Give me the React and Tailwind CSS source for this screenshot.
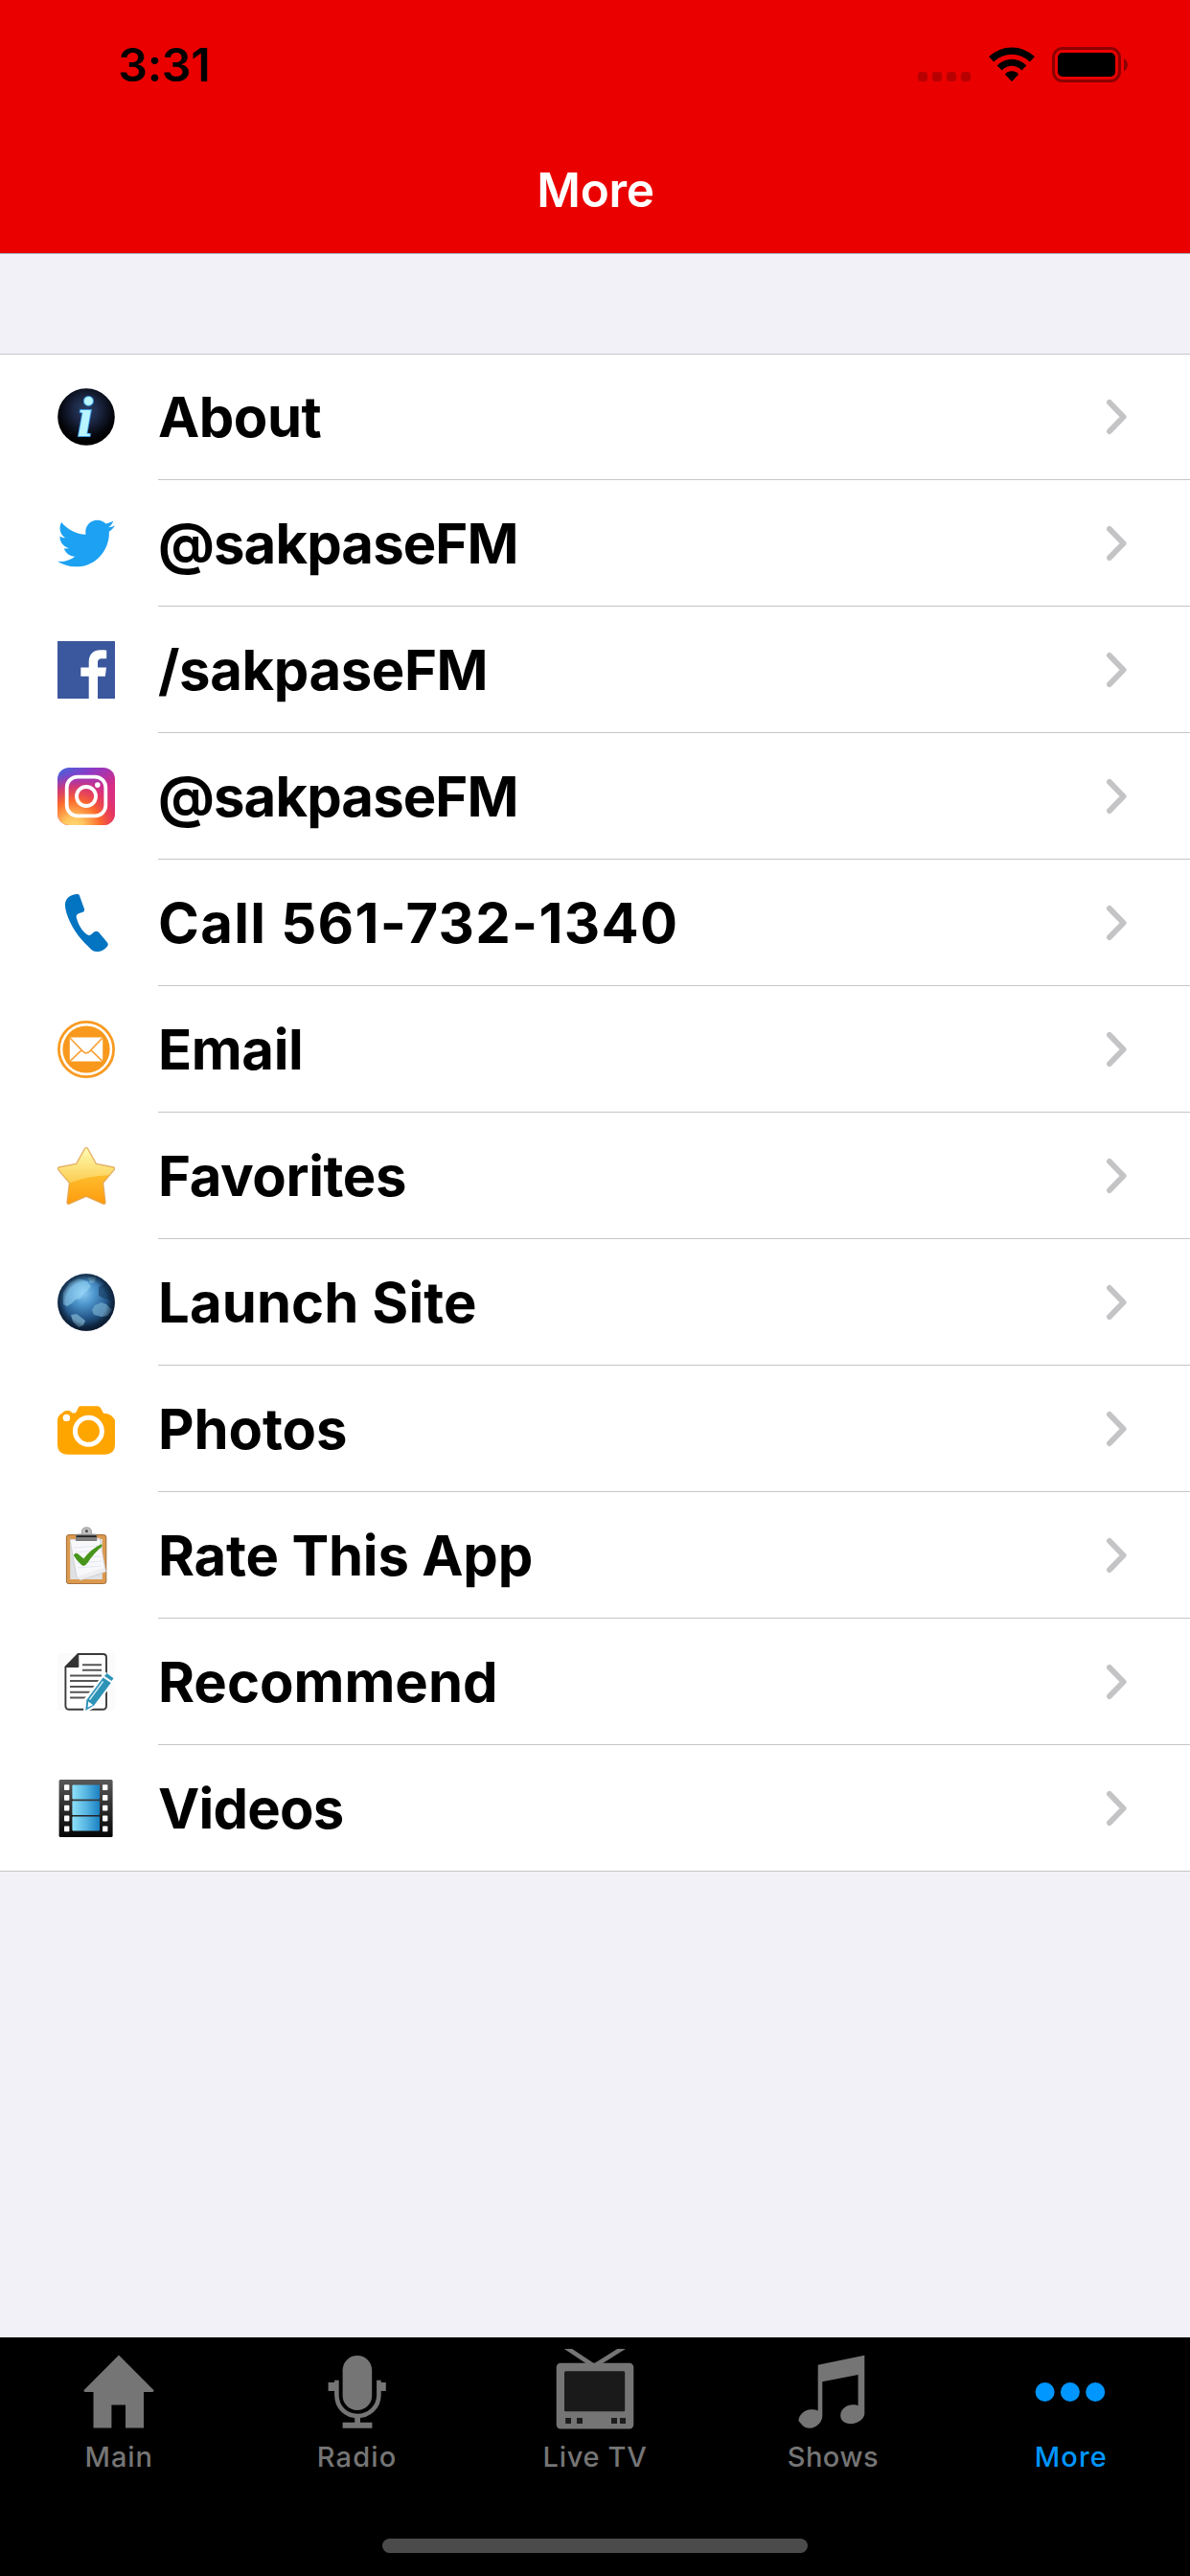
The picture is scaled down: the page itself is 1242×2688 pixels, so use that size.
import { FaTwitter } from "react-icons/fa";

function InfoIcon() {
  return (
    <svg viewBox="0 0 60 60" className="size-[60px] overflow-visible">
      <defs>
        <radialGradient id="info-bg" cx="0.5" cy="0.38" r="0.55">
          <stop offset="0" stopColor="#2b4168" />
          <stop offset="0.45" stopColor="#1a2440" />
          <stop offset="0.85" stopColor="#05070d" />
          <stop offset="1" stopColor="#000" />
        </radialGradient>
      </defs>
      <circle cx="30" cy="30" r="29.8" fill="url(#info-bg)" />
      <text
        x="20.5"
        y="49.5"
        fontSize="60"
        fontWeight="700"
        fontStyle="italic"
        fontFamily="'Liberation Serif', serif"
        fill="#b9f5ff"
        stroke="#3d9be6"
        strokeWidth="2"
        paintOrder="stroke"
      >
        i
      </text>
    </svg>
  );
}

function TwitterIcon() {
  return <FaTwitter className="size-[60px] text-[#1da1f2]" />;
}

function FacebookIcon() {
  return (
    <svg viewBox="0 0 60 60" className="size-[60px]">
      <rect width="60" height="60" fill="#3b589e" />
      <path
        d="M32.7 60V36.7H24.3V27.6H32.7V22C32.7 13.5 37.5 9.2 45 9.2C47.8 9.2 50 9.4 51.2 9.6V18.3H46.5C43 18.3 42 20 42 22.6V27.6H51L49.8 36.7H42V60Z"
        fill="#fff"
      />
    </svg>
  );
}

function InstagramIcon() {
  return (
    <svg viewBox="0 0 60 60" className="size-[60px]">
      <defs>
        <linearGradient id="ig-base" x1="0.1" y1="0" x2="0.75" y2="1">
          <stop offset="0" stopColor="#4a62d8" />
          <stop offset="0.25" stopColor="#8a3ac8" />
          <stop offset="0.6" stopColor="#d62d86" />
          <stop offset="1" stopColor="#e8306c" />
        </linearGradient>
        <radialGradient id="ig-warm" cx="0.28" cy="1.05" r="0.95">
          <stop offset="0" stopColor="#ffdc7d" />
          <stop offset="0.2" stopColor="#ffc45c" />
          <stop offset="0.5" stopColor="#fb6a2c" />
          <stop offset="0.75" stopColor="#e63a5a" stopOpacity="0.75" />
          <stop offset="1" stopColor="#c9309a" stopOpacity="0" />
        </radialGradient>
      </defs>
      <rect width="60" height="60" rx="12" fill="url(#ig-base)" />
      <rect width="60" height="60" rx="12" fill="url(#ig-warm)" />
      <rect x="9.7" y="9.7" width="40.6" height="40.6" rx="11" fill="none" stroke="#fff" strokeWidth="3.8" />
      <circle cx="30" cy="30" r="10" fill="none" stroke="#fff" strokeWidth="3.8" />
      <circle cx="41.8" cy="18.1" r="2.8" fill="#fff" />
    </svg>
  );
}

function PhoneIcon() {
  return (
    <svg viewBox="0 0 60 60" className="size-[60px]">
      <path
        d="M17 0.6C19.5 -0.2 22 -0.4 22.8 1L28 15.5C28.5 17.4 27.5 18.6 25 19.2C20.5 20.4 19.2 21.5 19.8 24.5C21.8 32 25.5 38.5 31 42.3C33 43.6 34.5 43 36.5 41C38.5 38.6 41 38 42.8 39.5L51.8 50.2C53.2 52 53 53.4 51.6 55C48.5 58.4 45.5 60 41.5 60C37.5 60 35 58 32.5 55C22 45.5 13.5 33 9.5 20C7.8 14 7.2 9 9.5 5.5C11.2 3 14 1.4 17 0.6Z"
        fill="#0274c1"
      />
    </svg>
  );
}

function EmailIcon() {
  return (
    <svg viewBox="0 0 60 60" className="size-[60px]">
      <circle cx="30" cy="30" r="28.6" fill="#fff" stroke="#f89b22" strokeWidth="2.8" />
      <circle cx="30" cy="30" r="24.6" fill="#f8991d" />
      <rect x="12.8" y="17.6" width="34.4" height="25" rx="1" fill="#fff" />
      <path
        d="M13 18L26.5 32.2Q30 35.6 33.5 32.2L47 18M13 42.4L25 30.8M47 42.4L35 30.8"
        fill="none"
        stroke="#f8a43a"
        strokeWidth="1.7"
      />
    </svg>
  );
}

function StarIcon() {
  return (
    <svg viewBox="0 0 60 60" className="size-[60px]">
      <defs>
        <linearGradient id="star-top" x1="0" y1="0" x2="0" y2="1">
          <stop offset="0" stopColor="#fffbb8" />
          <stop offset="0.5" stopColor="#fde27c" />
          <stop offset="1" stopColor="#fbc544" />
        </linearGradient>
        <linearGradient id="star-low" x1="0" y1="0" x2="0" y2="1">
          <stop offset="0" stopColor="#fdbd2e" />
          <stop offset="1" stopColor="#ff9a0c" />
        </linearGradient>
        <clipPath id="star-clip">
          <path d="M28.4 1.6Q30 -0.8 31.6 1.6L40.4 17.4L58.6 21Q60.6 21.8 59 23.8L47.6 37.4L50 57.6Q50 60 47.6 59.2L30 51.4L12.4 59.2Q10 60 10 57.6L12.4 37.4L1 23.8Q-0.6 21.8 1.4 21L19.6 17.4Z" />
        </clipPath>
      </defs>
      <g clipPath="url(#star-clip)">
        <rect width="60" height="42" fill="url(#star-top)" />
        <path d="M0 42Q14 37 26 33Q40 29.5 60 29V60H0Z" fill="url(#star-low)" />
      </g>
      <path
        d="M28.4 1.6Q30 -0.8 31.6 1.6L40.4 17.4L58.6 21Q60.6 21.8 59 23.8L47.6 37.4L50 57.6Q50 60 47.6 59.2L30 51.4L12.4 59.2Q10 60 10 57.6L12.4 37.4L1 23.8Q-0.6 21.8 1.4 21L19.6 17.4Z"
        fill="none"
        stroke="#dfa04e"
        strokeOpacity="0.8"
        strokeWidth="1.3"
      />
    </svg>
  );
}

function GlobeIcon() {
  return (
    <svg viewBox="0 0 60 60" className="size-[60px]">
      <defs>
        <radialGradient id="globe-sea" cx="0.45" cy="0.34" r="0.66">
          <stop offset="0" stopColor="#8ccbf3" />
          <stop offset="0.3" stopColor="#4d96cc" />
          <stop offset="0.65" stopColor="#26598c" />
          <stop offset="0.88" stopColor="#12304f" />
          <stop offset="1" stopColor="#0b1c30" />
        </radialGradient>
        <radialGradient id="globe-rim" cx="0.5" cy="0.5" r="0.5">
          <stop offset="0.72" stopColor="#0b1c30" stopOpacity="0" />
          <stop offset="1" stopColor="#0b1c30" stopOpacity="0.85" />
        </radialGradient>
        <clipPath id="globe-clip">
          <circle cx="30" cy="30" r="29.8" />
        </clipPath>
      </defs>
      <circle cx="30" cy="30" r="29.8" fill="url(#globe-sea)" />
      <g clipPath="url(#globe-clip)">
        <path d="M6 20L13 9L22 5L31 8L35 13L31 18L27 20L24 26L19 27L15 31L10 34L6 32Z" fill="#a4e0fb" opacity="0.5" />
        <path d="M32 4L40 3L39 9L34 10Z" fill="#9fd4ee" opacity="0.45" />
        <path d="M43 14L50 10L57 22L56 28L49 26L43 23Z" fill="#0d3050" opacity="0.5" />
        <path d="M39 33L46 30L51 32L57 38L52 44L46 45L38 43L36 38Z" fill="#79b3d2" opacity="0.65" />
        <path d="M14 43L20 42L29 49L27 54L22 56L16 50Z" fill="#84b8d3" opacity="0.7" />
      </g>
      <circle cx="30" cy="30" r="29.8" fill="url(#globe-rim)" />
    </svg>
  );
}

function CameraIcon() {
  return (
    <svg viewBox="0 0 60 60" className="size-[60px]">
      <path
        d="M24 6.2H41.5Q44 6.2 45.2 8.6L48 13.8Q56 13.6 60 21V46Q60 56.5 49 56.7H11Q0 56.5 0 46V21Q0.4 16 5 13.6Q6.5 11 9 11H12Q14 11 15.4 13.6H17.5Q19 13.6 19.8 12L21.4 8.4Q22.2 6.2 24 6.2Z"
        fill="#ffa500"
      />
      <circle cx="32.4" cy="32.3" r="14" fill="none" stroke="#fff" strokeWidth="5" />
      <circle cx="9.4" cy="18.4" r="3.7" fill="#fff" />
    </svg>
  );
}

function ClipboardIcon() {
  return (
    <svg viewBox="0 0 60 60" className="size-[60px]">
      <defs>
        <linearGradient id="clip-metal" x1="0" y1="0" x2="0" y2="1">
          <stop offset="0" stopColor="#aaa" />
          <stop offset="0.35" stopColor="#555" />
          <stop offset="0.6" stopColor="#888" />
          <stop offset="1" stopColor="#777" />
        </linearGradient>
      </defs>
      <rect x="9.4" y="8.6" width="41.4" height="51" rx="2.5" fill="#dc9a4e" stroke="#a06c34" strokeWidth="1" />
      <rect x="13.2" y="13" width="33.6" height="42" fill="#dfe1e4" />
      <path d="M13 14L44 12L50.6 47L24 56L20 53Z" fill="#eeeef1" stroke="#c4c4c8" strokeWidth="0.6" />
      <path d="M14 14H44L48 43L21 52Z" fill="#f8f8fb" />
      <path d="M17 22L43 20M18 27L44 25M19 33L45 31M20 38L46 36M21 43L46 41" stroke="#dde2ef" strokeWidth="0.8" />
      <path d="M25.5 8.6V5.5Q25.5 0.9 30.4 0.9Q35.3 0.9 35.3 5.5V8.6Z" fill="#c4c4c4" stroke="#888" strokeWidth="0.9" />
      <circle cx="30.4" cy="4.7" r="1.6" fill="#555" />
      <path d="M21.5 7.6H39Q41.2 7.6 41.2 10V15H19V10Q19 7.6 21.5 7.6Z" fill="url(#clip-metal)" />
      <path d="M20 10.2H40.5" stroke="#222" strokeWidth="1.6" />
      <path
        d="M16.8 30Q18.5 26.6 21.2 28.2L27.4 33.4Q34 24 45.6 18.2Q47.4 19 46.2 21Q38 27.5 31.6 37.6Q28 43 24.6 39.6Q20 35.5 16.8 30Z"
        fill="#47961b"
      />
    </svg>
  );
}

function DocumentIcon() {
  return (
    <svg viewBox="0 0 60 60" className="size-[60px]">
      <rect width="60" height="60" fill="#fbfbfb" />
      <path d="M21.5 1H47.5Q51 1 51 4.5V55Q51 58.8 47 58.8H12.4Q8.4 58.8 8.4 55V14.5Z" fill="#fff" stroke="#3a3a3a" strokeWidth="1.9" />
      <path d="M21.8 1V14.5H8.2Z" fill="#333" stroke="#333" strokeWidth="1" />
      <path
        d="M26 12.2H46M26 17.8H46M13 23.5H46M13 29H44M13 35H39M13 40.7H35M13 46.5H30"
        stroke="#555"
        strokeWidth="1.9"
      />
      <path d="M50 21.5L58.6 27.6L38.5 55.5L28.6 60.5L29.2 48.5Z" fill="#fff" stroke="#fff" strokeWidth="3" />
      <path d="M51.5 21L58.5 26.2L56.6 29L49 24Z" fill="#2d93b7" />
      <path d="M47.6 25.4L55.8 31L38.2 54.6L29.2 60L30.4 48.8Z" fill="#2d93b7" />
      <path d="M47.6 29.5L33.6 48.5" stroke="#d8eef5" strokeWidth="1.3" />
      <path d="M32.2 50.5L37 54L31.6 56.8Z" fill="#fff" />
    </svg>
  );
}

function FilmIcon() {
  const holes = [5.2, 16, 26.8, 37.6, 48.4];
  const frames = [5.6, 22.2, 38.6];
  return (
    <svg viewBox="0 0 60 60" className="size-[60px]">
      <defs>
        <linearGradient id="film-body" x1="0" y1="0" x2="0" y2="1">
          <stop offset="0" stopColor="#595959" />
          <stop offset="0.5" stopColor="#2c2c2c" />
          <stop offset="1" stopColor="#050505" />
        </linearGradient>
        <linearGradient id="film-frame" x1="0" y1="0" x2="1" y2="0">
          <stop offset="0" stopColor="#8fe0f8" />
          <stop offset="0.5" stopColor="#57b6e2" />
          <stop offset="1" stopColor="#1b80c2" />
        </linearGradient>
      </defs>
      <rect x="1.6" y="0" width="56" height="60" rx="1.6" fill="url(#film-body)" />
      {holes.map((y) => (
        <g key={y} fill="#fff">
          <rect x="7" y={y} width="5.4" height="5.8" rx="0.8" />
          <rect x="47" y={y} width="5.4" height="5.8" rx="0.8" />
        </g>
      ))}
      {frames.map((y) => (
        <rect key={y} x="15.4" y={y} width="28.6" height="14.8" rx="0.8" fill="url(#film-frame)" />
      ))}
    </svg>
  );
}

const rows = [
  { label: "About", Icon: InfoIcon, tracking: "tracking-[-0.5px]" },
  { label: "@sakpaseFM", Icon: TwitterIcon, tracking: "tracking-[-0.9px]" },
  { label: "/sakpaseFM", Icon: FacebookIcon, tracking: "tracking-[-0.4px]" },
  { label: "@sakpaseFM", Icon: InstagramIcon, tracking: "tracking-[-0.9px]" },
  { label: "Call 561-732-1340", Icon: PhoneIcon, tracking: "tracking-[1.28px]" },
  { label: "Email", Icon: EmailIcon, tracking: "tracking-[-0.4px]" },
  { label: "Favorites", Icon: StarIcon, tracking: "tracking-[-0.38px]" },
  { label: "Launch Site", Icon: GlobeIcon, tracking: "tracking-[0.1px]" },
  { label: "Photos", Icon: CameraIcon, tracking: "tracking-[-0.1px]" },
  { label: "Rate This App", Icon: ClipboardIcon, tracking: "tracking-[-0.2px]" },
  { label: "Recommend", Icon: DocumentIcon, tracking: "tracking-[-0.02px]" },
  { label: "Videos", Icon: FilmIcon, tracking: "tracking-[-0.8px]" },
];

function HomeTab() {
  return <path d="M50 18.6L86.6 55.2Q86.8 57 85 57H76V94.6H57V70.6H42.4V94.6H23.5V57H15Q13.2 57 13.4 55.2Z" />;
}

function RadioTab() {
  return (
    <>
      <rect x="34.6" y="19" width="30.6" height="57" rx="15.3" />
      <path d="M28.4 44.7V60C28.4 73 38 82 50 82C62 82 72.4 73 72.4 60V44.7" fill="none" stroke="currentColor" strokeWidth="4.6" />
      <path d="M19.6 47H27V56H19.6ZM73 47H79.8V56H73ZM47.2 82H53V90H47.2ZM34.6 88.7H65.4V94.7H34.6Z" />
    </>
  );
}

function TvTab() {
  return (
    <>
      <defs>
        <clipPath id="antenna-clip">
          <rect x="0" y="12" width="100" height="20" />
        </clipPath>
      </defs>
      <path d="M16 8L49 30L84 8" fill="none" stroke="currentColor" strokeWidth="4.6" clipPath="url(#antenna-clip)" />
      <rect x="9.7" y="26.7" width="80.6" height="68.8" rx="4.5" />
      <rect x="18" y="35.2" width="63.2" height="42" rx="1.5" fill="#1a1a1a" />
      <path d="M19.2 84H25V90H19.2ZM31 84H37V90H31ZM67 84H73V90H67ZM76 84H82V90H76Z" fill="#1c1c1c" />
    </>
  );
}

function MusicTab() {
  return (
    <path d="M34.7 28.7L83.3 18.8V80C83 85 76 90.2 69 90.2C62.5 90.2 58.2 86.5 58.2 81.5C58.2 75 64.5 70.2 71.5 70.2C73.5 70.2 75.4 70.6 76.6 71.2V39L39.3 46.3V82C39.3 88 33.5 94.7 26 94.7C19.5 94.7 17.8 90.5 14.5 87.2C14.5 81 20.5 75.3 27.5 75.3C30.4 75.3 33 75.7 34.7 76.6Z" />
  );
}

function MoreTab() {
  return (
    <>
      <circle cx="22.6" cy="57" r="10" />
      <circle cx="48.9" cy="57" r="10" />
      <circle cx="75.2" cy="57" r="10" />
    </>
  );
}

const tabs = [
  { label: "Main", Glyph: HomeTab, style: "text-[#757575] tracking-[0.92px]" },
  { label: "Radio", Glyph: RadioTab, style: "text-[#757575] tracking-[1.16px]" },
  { label: "Live TV", Glyph: TvTab, style: "text-[#757575] tracking-[0.68px]" },
  { label: "Shows", Glyph: MusicTab, style: "text-[#757575] tracking-[0.51px]" },
  { label: "More", Glyph: MoreTab, style: "text-[#0096ff] tracking-[1.05px]" },
];

function StatusIcons() {
  return (
    <div className="flex h-[37px] items-start">
      <div className="mr-[19px] flex gap-[5px] pt-[26px]">
        {[0, 1, 2, 3].map((dot) => (
          <span key={dot} className="size-[10px] rounded-[3px] bg-[#b90000]" />
        ))}
      </div>
      <svg viewBox="0 0 48 36" className="mr-[18px] h-[36px] w-[48px]">
        <path d="M2.6 12.8C15 1.2 33 1.2 45.4 12.8" fill="none" stroke="#000" strokeWidth="7.4" />
        <path d="M11.2 22C18.5 14.4 29.5 14.4 36.8 22" fill="none" stroke="#000" strokeWidth="7" />
        <path d="M17.6 29.2C17 28.4 17.2 27.8 18 27.2C21.8 24.6 26.2 24.6 30 27.2C30.8 27.8 31 28.4 30.4 29.2L24.6 35.4Q24 36 23.4 35.4Z" />
      </svg>
      <svg viewBox="0 0 80 37" className="h-[37px] w-[80px]">
        <rect x="1.5" y="1.5" width="69" height="34" rx="9.5" fill="none" stroke="#8c0000" strokeWidth="3" />
        <rect x="6" y="6" width="60" height="25" rx="5" />
        <path d="M75 12C80.2 15 80.2 22.5 75 25.5Z" fill="#8c0000" />
      </svg>
    </div>
  );
}

export default function App() {
  return (
    <div className="flex h-[2688px] w-[1242px] flex-col bg-[#f2f1f7] font-['Inter',sans-serif]">
      <header className="h-[265px] shrink-0 border-b border-[#a3a3a8] bg-[#eb0000]">
        <div className="flex h-[132px] items-center justify-between pt-[3px] pr-[64px] pl-[123px]">
          <span className="text-[48px] leading-[60px] font-semibold tracking-[-0.13px] text-black">3:31</span>
          <StatusIcons />
        </div>
        <h1 className="pl-px text-center text-[49.5px] leading-[132px] font-semibold tracking-[-0.3px] text-white">More</h1>
      </header>

      <main className="flex-1 pt-[104px]">
        <ul className="border-b border-[#c6c6c8] bg-white shadow-[inset_0_1px_0_#c6c6c8]">
          {rows.map(({ label, Icon, tracking }, index) => (
            <li key={index} className="flex h-[132px] items-center last:h-[131px]">
              <div className="flex w-[165px] shrink-0 pl-[60px]">
                <Icon />
              </div>
              <div
                className={
                  index === rows.length - 1
                    ? "flex h-[131px] flex-1 items-center justify-between pt-px pr-[64px]"
                    : "flex h-[132px] flex-1 items-center justify-between border-b border-[#c6c6c8] pt-px pr-[64px]"
                }
              >
                <span className={`text-[58px] leading-[70px] font-bold whitespace-nowrap text-black ${tracking}`}>{label}</span>
                <svg viewBox="0 0 24 38" className="h-[38px] w-[24px]">
                  <path d="M4 4L18.6 19L4 34" fill="none" stroke="#c4c4c6" strokeWidth="6" strokeLinecap="round" strokeLinejoin="round" />
                </svg>
              </div>
            </li>
          ))}
        </ul>
      </main>

      <nav className="flex h-[249px] shrink-0 flex-col justify-between bg-black pb-[24px]">
        <div className="grid grid-cols-5">
          {tabs.map(({ label, Glyph, style }) => (
            <div key={label} className={`flex flex-col items-center text-[29px] leading-[49px] font-medium ${style}`}>
              <svg viewBox="0 0 100 100" fill="currentColor" className="size-[100px]">
                <Glyph />
              </svg>
              <span>{label}</span>
            </div>
          ))}
        </div>
        <div className="h-[15px] w-[444px] self-center rounded-full bg-[#4b4b4b]" />
      </nav>
    </div>
  );
}
